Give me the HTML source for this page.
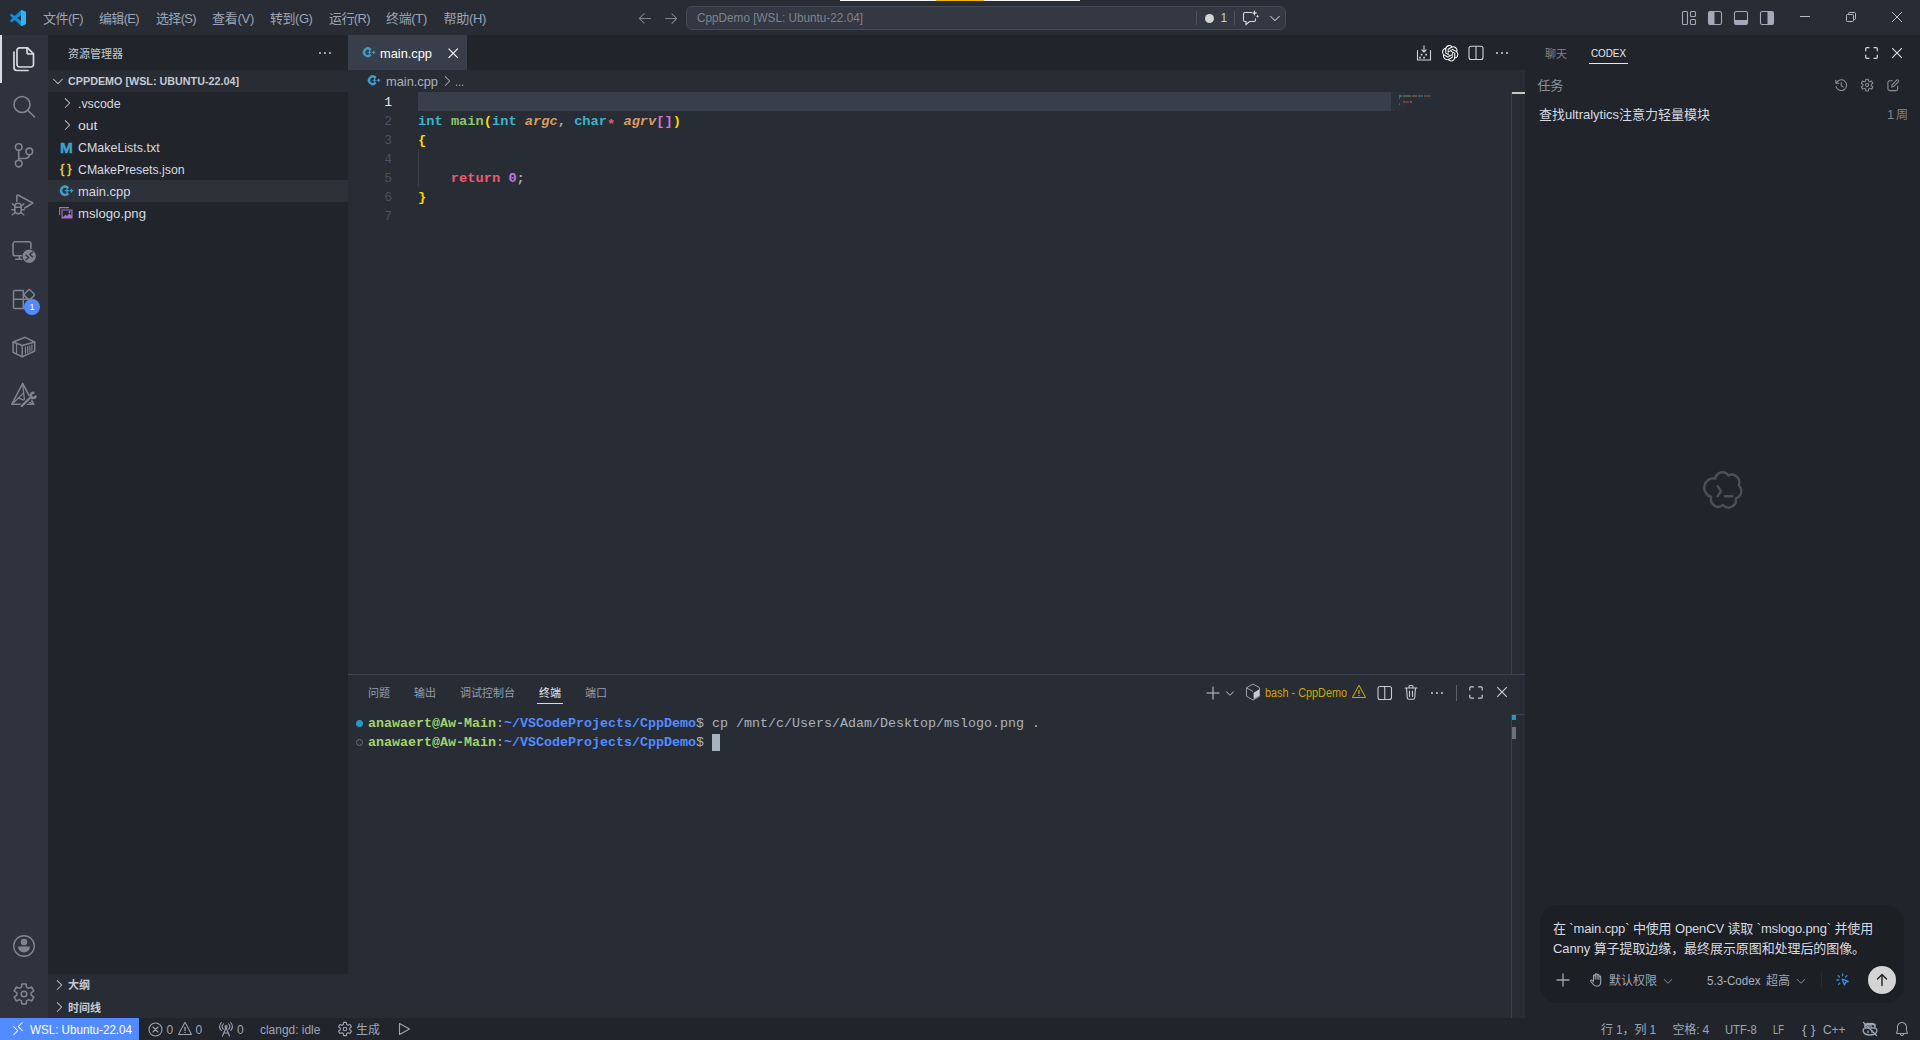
<!DOCTYPE html>
<html lang="zh-CN">
<head>
<meta charset="utf-8">
<title>main.cpp - CppDemo [WSL: Ubuntu-22.04] - Visual Studio Code</title>
<style>
*{box-sizing:border-box;margin:0;padding:0}
html,body{width:1920px;height:1040px;overflow:hidden;background:#282c34}
body{font-family:"Liberation Sans","Noto Sans CJK SC",sans-serif;font-size:13px;color:#9da5b4;position:relative;-webkit-font-smoothing:antialiased}
.abs{position:absolute}
.t{position:absolute;white-space:nowrap;line-height:1}
svg{position:absolute;overflow:visible}
.mono{font-family:"Liberation Mono","Noto Sans CJK SC",monospace}
/* regions */
#titlebar{left:0;top:0;width:1920px;height:35px;background:#282c34}
#activity{left:0;top:35px;width:48px;height:983px;background:#2f333d}
#sidebar{left:48px;top:35px;width:300px;height:983px;background:#21252b}
#tabs{left:348px;top:35px;width:1177px;height:35px;background:#21252b}
#crumbs{left:348px;top:70px;width:1177px;height:22px;background:#282c34}
#editor{left:348px;top:92px;width:1177px;height:582px;background:#282c34}
#panel{left:348px;top:674px;width:1177px;height:344px;background:#282c34}
#aux{left:1525px;top:35px;width:395px;height:983px;background:#21252b}
#status{left:0;top:1018px;width:1920px;height:22px;background:#21252b}
.layer{left:0;top:0;width:1920px;height:1040px}
.r{position:absolute}
</style>
</head>
<body>
<div id="titlebar" class="abs"></div>
<div id="activity" class="abs"></div>
<div id="sidebar" class="abs"></div>
<div id="tabs" class="abs"></div>
<div id="crumbs" class="abs"></div>
<div id="editor" class="abs"></div>
<div id="panel" class="abs"></div>
<div id="aux" class="abs"></div>
<div id="status" class="abs"></div>
<div class="abs layer"><!-- top accent strip -->
<div class="r" style="left:840px;top:0;width:240px;height:1px;background:#f5f5f5"></div>
<div class="r" style="left:936px;top:0;width:48px;height:1px;background:#e9b60c"></div>
<!-- vscode logo -->
<svg style="left:10px;top:10px" width="16" height="16" viewBox="0 0 100 100"><path fill="#0e8ddc" d="M96.5 10.8 75.9.9a6.2 6.2 0 0 0-7.1 1.2L29.4 38 12.200 25a4.200 4.200 0 0 0-5.300.200L1.400 30.300a4.200 4.200 0 0 0 0 6.200L16.200 50 1.400 63.500a4.200 4.200 0 0 0 0 6.200l5.500 5a4.200 4.200 0 0 0 5.300.300L29.400 62l39.400 36a6.200 6.200 0 0 0 7.100 1.200l20.600-9.900a6.200 6.200 0 0 0 3.500-5.600V16.400a6.200 6.200 0 0 0-3.500-5.600zM75 72.700 45.100 50 75 27.300z"/><path fill="#2cb4f6" d="M96.500 10.800 75.900.900a6.200 6.200 0 0 0-7.100 1.200L68 3v94l.800.900a6.200 6.200 0 0 0 7.100 1.200l20.600-9.900a6.200 6.200 0 0 0 3.500-5.600V16.400a6.200 6.200 0 0 0-3.500-5.600zM75 72.700V27.300z"/></svg>
<span class="t" style="left:43.00px;top:11.89px;font-size:13px;color:#9da5b4;letter-spacing:-0.522px;">文件(F)</span>
<span class="t" style="left:99.00px;top:11.89px;font-size:13px;color:#9da5b4;letter-spacing:-0.669px;">编辑(E)</span>
<span class="t" style="left:156.00px;top:11.89px;font-size:13px;color:#9da5b4;letter-spacing:-0.669px;">选择(S)</span>
<span class="t" style="left:212.00px;top:11.89px;font-size:13px;color:#9da5b4;letter-spacing:-0.269px;">查看(V)</span>
<span class="t" style="left:270.00px;top:11.89px;font-size:13px;color:#9da5b4;letter-spacing:-0.456px;">转到(G)</span>
<span class="t" style="left:329.00px;top:11.89px;font-size:13px;color:#9da5b4;letter-spacing:-0.609px;">运行(R)</span>
<span class="t" style="left:386.00px;top:11.89px;font-size:13px;color:#9da5b4;letter-spacing:-0.322px;">终端(T)</span>
<span class="t" style="left:443.50px;top:11.89px;font-size:13px;color:#9da5b4;letter-spacing:-0.309px;">帮助(H)</span>
<!-- nav arrows -->
<svg style="left:637px;top:10px" width="16" height="16" viewBox="0 0 16 16"><path fill="#7d8490" d="M7 3.093l-5 5V8.800l5 5 .707-.707-4.146-4.147H14v-1H3.560L7.708 3.800 7 3.093z"/></svg>
<svg style="left:663px;top:10px" width="16" height="16" viewBox="0 0 16 16"><path fill="#7d8490" d="M9 13.887l5-5V8.180l-5-5-.707.707 4.146 4.147H2v1h10.440L8.292 13.180l.707.707z"/></svg>
<!-- command center -->
<div class="r" style="left:686px;top:6px;width:600px;height:24px;background:#333842;border:1px solid #444a56;border-radius:6px"></div>
<span class="t" style="left:697.00px;top:12.36px;font-size:12px;color:#7d8490;transform:scaleX(0.9798);transform-origin:0 50%;">CppDemo [WSL: Ubuntu-22.04]</span>
<div class="r" style="left:1196px;top:11px;width:1px;height:14px;background:#4b515d"></div>
<div class="r" style="left:1234px;top:11px;width:1px;height:14px;background:#4b515d"></div>
<div class="r" style="left:1205px;top:13.500px;width:9px;height:9px;border-radius:50%;background:#d4d4d4"></div>
<span class="t" style="left:1220.50px;top:12.36px;font-size:12px;color:#c5cad3;">1</span>
<svg style="left:1242px;top:10px" width="18" height="16" viewBox="0 0 18 16" fill="none" stroke="#d7dae0" stroke-width="1.100"><path d="M10 2.500H3a1.500 1.500 0 0 0-1.500 1.500v6A1.500 1.500 0 0 0 3 11.500h1v3l3.500-3H12a1.500 1.500 0 0 0 1.500-1.500V8.500"/><path fill="#d7dae0" stroke="none" d="M12.500 0l.800 2.200 2.200.800-2.200.800-.800 2.200-.800-2.200-2.200-.800 2.200-.800zM15.500 4.500l.500 1.300 1.300.500-1.300.500-.500 1.300-.500-1.300-1.300-.500 1.300-.500z"/></svg>
<svg style="left:1266.500px;top:10px" width="16" height="16" viewBox="0 0 16 16"><path fill="#c5cad3" d="M7.976 10.072l4.357-4.357.620.618L8.284 11h-.618L3 6.333l.619-.618 4.357 4.357z"/></svg>
<!-- layout controls -->
<svg style="left:1681px;top:10px" width="16" height="16" viewBox="0 0 16 16" fill="none" stroke="#a3aaba" stroke-width="1.100"><rect x="1.500" y="1.500" width="5" height="13" rx="1"/><rect x="9.500" y="1.500" width="5" height="5" rx="1"/><rect x="9.500" y="9.500" width="5" height="5" rx="1"/></svg>
<svg style="left:1707px;top:10px" width="16" height="16" viewBox="0 0 16 16"><path fill="#a3aaba" d="M3 1.500h4.500v13H3A1.500 1.500 0 0 1 1.500 13V3A1.500 1.500 0 0 1 3 1.500z"/><rect x="1.500" y="1.500" width="13" height="13" rx="1.800" fill="none" stroke="#a3aaba" stroke-width="1.100"/></svg>
<svg style="left:1733px;top:10px" width="16" height="16" viewBox="0 0 16 16"><path fill="#a3aaba" d="M1.500 10h13v3a1.500 1.500 0 0 1-1.500 1.500H3A1.500 1.500 0 0 1 1.500 13z"/><rect x="1.500" y="1.500" width="13" height="13" rx="1.800" fill="none" stroke="#a3aaba" stroke-width="1.100"/></svg>
<svg style="left:1759px;top:10px" width="16" height="16" viewBox="0 0 16 16"><path fill="#a3aaba" d="M8.500 1.500H13A1.500 1.500 0 0 1 14.500 3v10a1.500 1.500 0 0 1-1.500 1.500H8.500z"/><rect x="1.500" y="1.500" width="13" height="13" rx="1.800" fill="none" stroke="#a3aaba" stroke-width="1.100"/></svg>
<!-- window controls -->
<div class="r" style="left:1800px;top:16px;width:10px;height:1px;background:#b4bac5"></div>
<svg style="left:1846px;top:12px" width="10" height="10" viewBox="0 0 10 10" fill="none" stroke="#b4bac5" stroke-width="1"><rect x=".500" y="2.500" width="7" height="7" rx="1"/><path d="M2.500 2.500V1.500a1 1 0 0 1 1-1h5a1 1 0 0 1 1 1v5a1 1 0 0 1-1 1h-1"/></svg>
<svg style="left:1892px;top:12px" width="10" height="10" viewBox="0 0 10 10" stroke="#b4bac5" stroke-width="1"><path d="M0 0l10 10M10 0L0 10"/></svg>
</div>
<div class="abs layer"><div class="r" style="left:0;top:35px;width:2px;height:48px;background:#d7dae0"></div>
<!-- files -->
<svg style="left:12px;top:46px" width="24" height="26" viewBox="0 0 24 26" fill="none" stroke="#d7dae0" stroke-width="1.700" stroke-linejoin="round" stroke-linecap="round"><path d="M7.500 1.800h8l6 6v10.700a2.500 2.500 0 0 1-2.500 2.500H7.500A2.500 2.500 0 0 1 5 18.500V4.300a2.500 2.500 0 0 1 2.500-2.500z"/><path d="M15 2v4a2 2 0 0 0 2 2h4"/><path d="M2 6v15.500A3 3 0 0 0 5 24.500h11"/></svg>
<!-- search -->
<svg style="left:12px;top:94px" width="24" height="24" viewBox="0 0 24 24" fill="none" stroke="#7f848e" stroke-width="1.600" stroke-linecap="round"><circle cx="10" cy="10.500" r="8"/><path d="M16 16.500l6.500 6.500"/></svg>
<!-- scm -->
<svg style="left:12px;top:142px" width="24" height="24" viewBox="0 0 24 24" fill="none" stroke="#7f848e" stroke-width="1.600" stroke-linecap="round"><circle cx="6.700" cy="5" r="3.300"/><circle cx="6.700" cy="21.600" r="3.300"/><circle cx="17.300" cy="9.400" r="3.300"/><path d="M6.700 8.300v10M17.300 12.700c0 3-2.500 3.800-5 3.800H6.700"/></svg>
<!-- debug -->
<svg style="left:12px;top:191px" width="24" height="26" viewBox="0 0 24 26" fill="none" stroke="#7f848e" stroke-width="1.600" stroke-linecap="round" stroke-linejoin="round"><path d="M4.800 10.300V5.200a1 1 0 0 1 1.500-.900L20.800 12l-8 5"/><rect x="2.800" y="12.300" width="6.500" height="10.400" rx="3.250"/><path stroke-width="1.400" d="M2.800 16.200h6.500M2.600 15L.300 12.800M2.600 18.800H-.200M3 21.600L.300 23.800M9.500 15l2.300-2.200M9.500 18.800h2.800M9.100 21.600l2.700 2.200"/></svg>
<!-- remote explorer -->
<svg style="left:12px;top:239px" width="26" height="26" viewBox="0 0 26 26" fill="none" stroke="#7f848e" stroke-width="1.600" stroke-linecap="round" stroke-linejoin="round"><path d="M9.500 16.800H3.200A2.200 2.200 0 0 1 1 14.600V5a2.200 2.200 0 0 1 2.200-2.200h13.500A2.200 2.200 0 0 1 18.900 5v4.500"/><path d="M3.800 20.200h6M7.400 17v3"/><circle cx="17.200" cy="17.200" r="6.700" fill="#7f848e" stroke="none"/><path stroke="#2f333d" stroke-width="1.300" d="M14.100 16.200l2.500 2.300-2.500 2.300M20.600 13.100l-2.800 2.500 2.800 2.300"/></svg>
<!-- extensions -->
<svg style="left:12px;top:287px" width="26" height="26" viewBox="0 0 26 26" fill="none" stroke="#7f848e" stroke-width="1.500" stroke-linejoin="round"><path d="M1.500 5a1.500 1.500 0 0 1 1.500-1.500h8.300V21.500H3a1.500 1.500 0 0 1-1.500-1.500zM1.500 12.300h18.300V20a1.500 1.500 0 0 1-1.500 1.500h-7"/><rect x="13.300" y="3.800" width="8" height="8" rx="1.200" transform="rotate(45 17.300 7.800)"/></svg>
<div class="r" style="left:24px;top:299px;width:16px;height:16px;border-radius:8px;background:#528bff"></div>
<span class="t" style="left:29.50px;top:302.77px;font-size:9px;color:#ffffff;">1</span>
<!-- containers -->
<svg style="left:12px;top:335px" width="24" height="24" viewBox="0 0 24 24" fill="none" stroke="#7f848e" stroke-width="1.500" stroke-linejoin="round" stroke-linecap="round"><path d="M1.100 7L13.200 2.300 22.700 7v9.100L10.200 21.700 1.100 17.400z"/><path d="M1.100 7l9.100 3.500L22.700 7M10.200 10.500v11.200"/><path stroke-width="1.200" d="M4.500 8.800v9.800M13.400 12v6.200M15.600 11.400v6M17.800 10.800v5.800M19.900 10.200v5.600"/></svg>
<!-- cmake -->
<svg style="left:11px;top:382px" width="26" height="26" viewBox="0 0 26 26" fill="none" stroke="#7f848e" stroke-width="1.600" stroke-linejoin="round" stroke-linecap="round"><path d="M11.600 1.500L.900 22.200h21.800z"/><path stroke-width="1.300" d="M11.600 1.500l1.900 16.300M.900 22.200L12.700 11M22.700 22.200L7.300 15.800"/><path stroke="#2f333d" stroke-width="4.600" d="M11.500 23.500l7.500-7.500"/><path stroke-width="2.400" d="M10.800 24l8-8"/><path stroke-width="2.600" d="M22.300 10.800a2.600 2.600 0 1 0 2.300 3.900"/></svg>
<!-- account -->
<svg style="left:12px;top:934px" width="24" height="24" viewBox="0 0 24 24"><circle cx="12" cy="12" r="10.300" fill="none" stroke="#7f848e" stroke-width="1.400"/><circle cx="12" cy="8" r="3.300" fill="#7f848e"/><path fill="#7f848e" d="M6 12.500h12a6 6 0 0 1-12 0z"/></svg>
<!-- settings -->
<svg style="left:12px;top:982px" width="24" height="24" viewBox="0 0 24 24" fill="none" stroke="#7f848e" stroke-width="1.600" stroke-linejoin="round"><path d="M9.460 5.160 L9.860 1.930 L14.140 1.930 L14.540 5.160 L16.650 6.380 L19.650 5.110 L21.800 8.820 L19.200 10.780 L19.200 13.220 L21.800 15.180 L19.650 18.890 L16.650 17.620 L14.540 18.840 L14.140 22.070 L9.860 22.070 L9.460 18.840 L7.350 17.620 L4.350 18.890 L2.200 15.180 L4.800 13.220 L4.800 10.780 L2.200 8.820 L4.350 5.110 L7.350 6.380Z"/><circle cx="12" cy="12" r="2.800"/></svg>
</div>
<div class="abs layer"><span class="t" style="left:68.00px;top:48.83px;font-size:11px;color:#c5cad3;">资源管理器</span>
<svg style="left:317px;top:45px" width="16" height="16" viewBox="0 0 16 16"><path fill="#c5cad3" d="M4 8a1 1 0 1 1-2 0 1 1 0 0 1 2 0zm5 0a1 1 0 1 1-2 0 1 1 0 0 1 2 0zm5 0a1 1 0 1 1-2 0 1 1 0 0 1 2 0z"/></svg>
<div class="r" style="left:48px;top:70px;width:300px;height:22px;background:#282c34"></div>
<svg style="left:50px;top:73px" width="16" height="16" viewBox="0 0 16 16"><path fill="#c5cad3" d="M7.976 10.072l4.357-4.357.620.618L8.284 11h-.618L3 6.333l.619-.618 4.357 4.357z"/></svg>
<span class="t" style="left:68.00px;top:75.83px;font-size:11px;color:#c5cad3;font-weight:700;transform:scaleX(0.9783);transform-origin:0 50%;">CPPDEMO [WSL: UBUNTU-22.04]</span>
<svg style="left:59px;top:95px" width="16" height="16" viewBox="0 0 16 16"><path fill="#c5cad3" d="M10.072 8.024L5.715 3.667l.618-.620L11 7.716v.618L6.333 13l-.618-.619 4.357-4.357z"/></svg>
<span class="t" style="left:78.00px;top:96.89px;font-size:13px;color:#d7dae0;transform:scaleX(0.9506);transform-origin:0 50%;">.vscode</span>
<svg style="left:59px;top:117px" width="16" height="16" viewBox="0 0 16 16"><path fill="#c5cad3" d="M10.072 8.024L5.715 3.667l.618-.620L11 7.716v.618L6.333 13l-.618-.619 4.357-4.357z"/></svg>
<span class="t" style="left:78.00px;top:118.89px;font-size:13px;color:#d7dae0;transform:scaleX(1.0787);transform-origin:0 50%;">out</span>
<span class="t" style="left:59.50px;top:140.25px;font-size:15px;color:#3fa4c9;font-weight:700;transform:scaleX(1.0240);transform-origin:0 50%;-webkit-text-stroke:.4px #3fa4c9;">M</span>
<span class="t" style="left:78.00px;top:140.89px;font-size:13px;color:#d7dae0;transform:scaleX(0.9572);transform-origin:0 50%;">CMakeLists.txt</span>
<span class="t" style="left:60.00px;top:162.39px;font-size:13px;color:#e6d74a;-webkit-text-stroke:.35px #e6d74a;">&#123;</span><span class="t" style="left:67.30px;top:162.39px;font-size:13px;color:#e6d74a;-webkit-text-stroke:.35px #e6d74a;">&#125;</span>
<span class="t" style="left:78.00px;top:162.89px;font-size:13px;color:#d7dae0;transform:scaleX(0.9457);transform-origin:0 50%;">CMakePresets.json</span>
<div class="r" style="left:48px;top:180px;width:300px;height:22px;background:#2c313a"></div>
<svg style="left:60px;top:185px" width="14" height="12" viewBox="0 0 14 12" fill="none" stroke="#409dc9" stroke-linecap="round"><path stroke-width="2.600" d="M7.600 2.500A4.100 4.100 0 1 0 7.600 9"/><path stroke-width="1.300" d="M5.300 5.700h3.400M7 4v3.400M10.200 5.700h2.600M11.500 4.400v2.600"/></svg>
<span class="t" style="left:78.00px;top:184.89px;font-size:13px;color:#d7dae0;transform:scaleX(0.9934);transform-origin:0 50%;">main.cpp</span>
<svg style="left:59px;top:207px" width="14" height="12" viewBox="0 0 14 12"><path fill="none" stroke="#a074c4" stroke-width="1.100" d="M.600 8V.600H10"/><rect x="2.500" y="2.500" width="11" height="9" fill="#a074c4"/><path fill="#21252b" d="M3.600 3.600h8.800v5l-2.200-2.200-2.200 2.700-1.600-1.300-2.800 2.500z"/><path stroke="#a074c4" stroke-width="1" d="M10.500 3.800v2.400M9.300 5h2.400"/></svg>
<span class="t" style="left:78.00px;top:206.89px;font-size:13px;color:#d7dae0;transform:scaleX(1.0116);transform-origin:0 50%;">mslogo.png</span>
<!-- outline/timeline -->
<div class="r" style="left:48px;top:974px;width:300px;height:44px;background:#282c34"></div>
<svg style="left:51px;top:977px" width="16" height="16" viewBox="0 0 16 16"><path fill="#c5cad3" d="M10.072 8.024L5.715 3.667l.618-.620L11 7.716v.618L6.333 13l-.618-.619 4.357-4.357z"/></svg>
<span class="t" style="left:68.00px;top:980.33px;font-size:11px;color:#c5cad3;font-weight:700;">大纲</span>
<svg style="left:51px;top:999px" width="16" height="16" viewBox="0 0 16 16"><path fill="#c5cad3" d="M10.072 8.024L5.715 3.667l.618-.620L11 7.716v.618L6.333 13l-.618-.619 4.357-4.357z"/></svg>
<span class="t" style="left:68.00px;top:1002.53px;font-size:11px;color:#c5cad3;font-weight:700;">时间线</span>
</div>
<div class="abs layer"><div class="r" style="left:348px;top:35px;width:119px;height:35px;background:#383e4a"></div>
<svg style="left:362.500px;top:46.500px" width="13" height="11" viewBox="0 0 14 12" fill="none" stroke="#409dc9" stroke-linecap="round"><path stroke-width="2.600" d="M7.600 2.500A4.100 4.100 0 1 0 7.600 9"/><path stroke-width="1.300" d="M5.300 5.700h3.400M7 4v3.400M10.200 5.700h2.600M11.500 4.400v2.600"/></svg>
<span class="t" style="left:380.00px;top:47.39px;font-size:13px;color:#ffffff;transform:scaleX(0.9858);transform-origin:0 50%;">main.cpp</span>
<svg style="left:443.800px;top:43.800px" width="18.400" height="18.400" viewBox="0 0 16 16"><path fill="#ffffff" d="M8 8.707l3.646 3.647.708-.707L8.707 8l3.647-3.646-.707-.708L8 7.293 4.354 3.646l-.707.708L7.293 8l-3.646 3.646.707.708L8 8.707z"/></svg>
<!-- editor actions -->
<svg style="left:1416px;top:44.500px" width="16" height="16" viewBox="0 0 16 16" fill="none" stroke="#d0d4dc" stroke-width="1.100" stroke-linejoin="round" stroke-linecap="round"><path d="M1.500 5.500V15h13V5.500"/><path d="M8 .800v6M5.800 4.800L8 7l2.200-2.200"/><path stroke="none" fill="#d0d4dc" d="M4.700 8.700h1.700v1.700H4.700zM9.300 8.700H11v1.700H9.300zM3.200 11.700h1.700v1.700H3.200zM7.200 11.700h1.700v1.700H7.200z"/></svg>
<svg style="left:1442px;top:44.500px" width="16.500" height="16.500" viewBox="0 0 24 24"><path fill="#ffffff" d="M22.2819 9.8211a5.9847 5.9847 0 0 0-.5157-4.9108 6.0462 6.0462 0 0 0-6.5098-2.9A6.0651 6.0651 0 0 0 4.9807 4.1818a5.9847 5.9847 0 0 0-3.9977 2.9 6.0462 6.0462 0 0 0 .7427 7.0966 5.98 5.98 0 0 0 .511 4.9107 6.051 6.051 0 0 0 6.5146 2.9001A5.9847 5.9847 0 0 0 13.2599 24a6.0557 6.0557 0 0 0 5.7718-4.2058 5.9894 5.9894 0 0 0 3.9977-2.9001 6.0557 6.0557 0 0 0-.7475-7.0729zm-9.022 12.6081a4.4755 4.4755 0 0 1-2.8764-1.0408l.1419-.0804 4.7783-2.7582a.7948.7948 0 0 0 .3927-.6813v-6.7369l2.02 1.1686a.071.071 0 0 1 .038.052v5.5826a4.504 4.504 0 0 1-4.4945 4.4944zm-9.6607-4.1254a4.4708 4.4708 0 0 1-.5346-3.0137l.142.0852 4.783 2.7582a.7712.7712 0 0 0 .7806 0l5.8428-3.3685v2.3324a.0804.0804 0 0 1-.0332.0615L9.74 19.9502a4.4992 4.4992 0 0 1-6.1408-1.6464zM2.3408 7.8956a4.485 4.485 0 0 1 2.3655-1.9728V11.6a.7664.7664 0 0 0 .3879.6765l5.8144 3.3543-2.0201 1.1685a.0757.0757 0 0 1-.071 0l-4.8303-2.7865A4.504 4.504 0 0 1 2.3408 7.872zm16.5963 3.8558L13.1038 8.364 15.1192 7.2a.0757.0757 0 0 1 .071 0l4.8303 2.7913a4.4944 4.4944 0 0 1-.6765 8.1042v-5.6772a.79.79 0 0 0-.407-.667zm2.0107-3.0231l-.142-.0852-4.7735-2.7818a.7759.7759 0 0 0-.7854 0L9.409 9.2297V6.8974a.0662.0662 0 0 1 .0284-.0615l4.8303-2.7866a4.4992 4.4992 0 0 1 6.6802 4.66zM8.3065 12.863l-2.02-1.1638a.0804.0804 0 0 1-.038-.0567V6.0742a4.4992 4.4992 0 0 1 7.3757-3.4537l-.142.0805L8.704 5.459a.7948.7948 0 0 0-.3927.6813zm1.0976-2.3654l2.602-1.4998 2.6069 1.4998v2.9994l-2.5974 1.4997-2.6067-1.4997Z"/></svg>
<svg style="left:1468px;top:45px" width="16" height="16" viewBox="0 0 16 16" fill="none" stroke="#d0d4dc" stroke-width="1.100"><rect x="1" y="1.200" width="14" height="13.300" rx="2"/><path d="M8 1.200v13.300"/></svg>
<svg style="left:1494px;top:45px" width="16" height="16" viewBox="0 0 16 16"><path fill="#d0d4dc" d="M4 8a1 1 0 1 1-2 0 1 1 0 0 1 2 0zm5 0a1 1 0 1 1-2 0 1 1 0 0 1 2 0zm5 0a1 1 0 1 1-2 0 1 1 0 0 1 2 0z"/></svg>
</div>
<div class="abs layer"><svg style="left:368px;top:75px" width="13" height="11" viewBox="0 0 14 12" fill="none" stroke="#409dc9" stroke-linecap="round"><path stroke-width="2.600" d="M7.600 2.500A4.100 4.100 0 1 0 7.600 9"/><path stroke-width="1.300" d="M5.300 5.700h3.400M7 4v3.400M10.200 5.700h2.600M11.500 4.400v2.600"/></svg>
<span class="t" style="left:386.00px;top:74.89px;font-size:13px;color:#abb2bf;transform:scaleX(0.9858);transform-origin:0 50%;">main.cpp</span>
<svg style="left:439px;top:73px" width="16" height="16" viewBox="0 0 16 16"><path fill="#abb2bf" d="M10.072 8.024L5.715 3.667l.618-.620L11 7.716v.618L6.333 13l-.618-.619 4.357-4.357z"/></svg>
<span class="t" style="left:454.50px;top:74.89px;font-size:13px;color:#abb2bf;transform:scaleX(0.8300);transform-origin:0 50%;">...</span>
</div>
<div class="abs layer"><style>
.cl{position:absolute;left:418px;font-family:"Liberation Mono",monospace;font-size:13.700px;font-weight:700;line-height:19px;white-space:pre;color:#abb2bf}
.ln{position:absolute;left:348px;width:44px;text-align:right;font-family:"Liberation Mono",monospace;font-size:13px;line-height:19px;color:#495162}
.k{color:#3cb4c8}.f{color:#8fc46e}.p1{color:#ffd700}.p2{color:#da70d6}.v{color:#d89a60;font-style:italic}.rd{color:#ef596f}.n{color:#c873e0}
</style>
<div class="r" style="left:418px;top:92px;width:973px;height:19px;background:#383e4a"></div>
<div class="r" style="left:418px;top:149px;width:1px;height:38px;background:#3b4048"></div>
<div class="ln" style="top:93px;color:#e6e6e6">1</div>
<div class="ln" style="top:112px">2</div>
<div class="ln" style="top:131px">3</div>
<div class="ln" style="top:150px">4</div>
<div class="ln" style="top:169px">5</div>
<div class="ln" style="top:188px">6</div>
<div class="ln" style="top:207px">7</div>
<div class="cl" style="top:112px"><span class="k">int</span> <span class="f">main</span><span class="p1">(</span><span class="k">int</span> <span class="v">argc</span>, <span class="k">char</span><span class="rd" style="position:relative;top:3px">*</span> <span class="v">agrv</span><span class="p2">[]</span><span class="p1">)</span></div>
<div class="cl" style="top:131px"><span class="p1">{</span></div>
<div class="cl" style="top:169px">    <span class="rd">return</span> <span class="n">0</span>;</div>
<div class="cl" style="top:188px"><span class="p1">}</span></div>
<!-- minimap -->
<div class="r" style="left:1391px;top:92px;width:14px;height:19px;background:#2b2f38"></div>
<div class="r" style="left:1399px;top:95px;width:3px;height:1.500px;background:#3cb4c8;opacity:.45"></div>
<div class="r" style="left:1403px;top:95px;width:8px;height:1.500px;background:#8fc46e;opacity:.35"></div>
<div class="r" style="left:1412px;top:95px;width:5px;height:1.500px;background:#d89a60;opacity:.35"></div>
<div class="r" style="left:1418px;top:95px;width:5px;height:1.500px;background:#3cb4c8;opacity:.35"></div>
<div class="r" style="left:1424px;top:95px;width:7px;height:1.500px;background:#d89a60;opacity:.25"></div>
<div class="r" style="left:1399px;top:97px;width:1px;height:1.500px;background:#ffd700;opacity:.25"></div>
<div class="r" style="left:1403px;top:101px;width:6px;height:1.500px;background:#ef596f;opacity:.35"></div>
<div class="r" style="left:1410px;top:101px;width:2px;height:1.500px;background:#c873e0;opacity:.45"></div>
<div class="r" style="left:1399px;top:103px;width:1px;height:1.500px;background:#ffd700;opacity:.25"></div>
<!-- overview ruler -->
<div class="r" style="left:1511px;top:92px;width:1px;height:582px;background:#3a3f4b"></div>
<div class="r" style="left:1512px;top:92px;width:13px;height:2px;background:#c8c8bc"></div>
</div>
<div class="abs layer"><div class="r" style="left:348px;top:674px;width:1177px;height:1px;background:#3e4452"></div>
<span class="t" style="left:368.00px;top:688.43px;font-size:11px;color:#969dab;">问题</span>
<span class="t" style="left:414.00px;top:688.43px;font-size:11px;color:#969dab;">输出</span>
<span class="t" style="left:460.00px;top:688.43px;font-size:11px;color:#969dab;">调试控制台</span>
<span class="t" style="left:539.00px;top:688.43px;font-size:11px;color:#e6e8ec;">终端</span>
<span class="t" style="left:585.00px;top:688.43px;font-size:11px;color:#969dab;">端口</span>
<div class="r" style="left:537px;top:703px;width:26px;height:1px;background:#d7dae0"></div>
<!-- panel actions -->
<svg style="left:1205px;top:684.500px" width="16" height="16" viewBox="0 0 16 16"><path fill="#c5cad3" d="M14.500 7.500v1H8.500v6H7.500V8.500H1.500V7.500h6V1.500h1v6h6z"/></svg>
<svg style="left:1221.500px;top:685px" width="16" height="16" viewBox="0 0 16 16"><path fill="#c5cad3" d="M7.976 10.072l4.357-4.357.620.618L8.284 11h-.618L3 6.333l.619-.618 4.357 4.357z" transform="translate(1.600 1.600) scale(.8)"/></svg>
<svg style="left:1245px;top:683px" width="16" height="18" viewBox="0 0 16 18" fill="none" stroke="#9aa1ae" stroke-width="1" stroke-linejoin="round"><path d="M8 1l6.500 3.700v8.600L8 17l-6.500-3.700V4.700z"/><path fill="#c5cad3" stroke="none" d="M8.600 9.800l5.400-3.200v6.300l-5.400 3.100z"/><path d="M1.500 4.700L8 8.500"/></svg>
<span class="t" style="left:1265.00px;top:686.86px;font-size:12px;color:#cca700;transform:scaleX(0.9039);transform-origin:0 50%;">bash - CppDemo</span>
<svg style="left:1351px;top:684px" width="16" height="16" viewBox="0 0 16 16"><path fill="#cca700" d="M7.560 1h.880l6.540 12.260-.440.740H1.440L1 13.260 7.560 1zM8 2.280L2.280 13H13.700L8 2.280zM8.625 12v-1h-1.250v1h1.250zm-1.250-2V6h1.250v4h-1.250z"/></svg>
<svg style="left:1377px;top:685px" width="16" height="16" viewBox="0 0 16 16" fill="none" stroke="#c5cad3" stroke-width="1.100"><rect x="1" y="1.500" width="13.500" height="13" rx="2"/><path d="M7.750 1.500v13"/></svg>
<svg style="left:1403px;top:684px" width="16" height="16" viewBox="0 0 16 16" fill="none" stroke="#c5cad3" stroke-width="1.100" stroke-linecap="round"><path d="M2 4h12M6 3.800V2.500a1 1 0 0 1 1-1h2a1 1 0 0 1 1 1v1.300M3.500 4.200l.800 9.800a1.500 1.500 0 0 0 1.500 1.300h4.400a1.500 1.500 0 0 0 1.500-1.300l.800-9.800M6.500 7v5.500M9.500 7v5.500"/></svg>
<svg style="left:1429px;top:684.500px" width="16" height="16" viewBox="0 0 16 16"><path fill="#c5cad3" d="M4 8a1 1 0 1 1-2 0 1 1 0 0 1 2 0zm5 0a1 1 0 1 1-2 0 1 1 0 0 1 2 0zm5 0a1 1 0 1 1-2 0 1 1 0 0 1 2 0z"/></svg>
<div class="r" style="left:1456px;top:685px;width:1px;height:16px;background:#5a606c"></div>
<svg style="left:1469px;top:685.500px" width="14" height="13" viewBox="0 0 14 13" fill="none" stroke="#c5cad3" stroke-width="1.200" stroke-linecap="round" stroke-linejoin="round"><path d="M.800 4V1.800a1 1 0 0 1 1-1H4.500M9.500.800h2.700a1 1 0 0 1 1 1V4M13.200 9v2.200a1 1 0 0 1-1 1H9.500M4.500 12.200H1.800a1 1 0 0 1-1-1V9"/></svg>
<svg style="left:1494px;top:684px" width="16" height="16" viewBox="0 0 16 16"><path fill="#c5cad3" d="M8 8.707l3.646 3.647.708-.707L8.707 8l3.647-3.646-.707-.708L8 7.293 4.354 3.646l-.707.708L7.293 8l-3.646 3.646.707.708L8 8.707z" transform="translate(-1.600 -1.600) scale(1.200)"/></svg>
<!-- terminal -->
<style>
.tl{position:absolute;left:368px;font-family:"Liberation Mono",monospace;font-size:13.330px;line-height:19px;white-space:pre;color:#abb2bf}
.tg{color:#a3d46e;font-weight:700}.tb{color:#528bff;font-weight:700}
</style>
<div class="r" style="left:355.500px;top:719.500px;width:7px;height:7px;border-radius:50%;background:#2798c4"></div>
<div class="r" style="left:355.500px;top:738.500px;width:7px;height:7px;border-radius:50%;border:1.300px solid #6b717d"></div>
<div class="tl" style="top:714px"><span class="tg">anawaert@Aw-Main</span>:<span class="tb">~/VSCodeProjects/CppDemo</span>$ cp /mnt/c/Users/Adam/Desktop/mslogo.png .</div>
<div class="tl" style="top:733px"><span class="tg">anawaert@Aw-Main</span>:<span class="tb">~/VSCodeProjects/CppDemo</span>$ </div>
<div class="r" style="left:712px;top:734px;width:8px;height:17px;background:#abb2bf"></div>
<!-- terminal scrollbar -->
<div class="r" style="left:1511px;top:714px;width:1px;height:304px;background:#3a3f4b"></div>
<div class="r" style="left:1511px;top:714px;width:14px;height:1px;background:#3a3f4b"></div>
<div class="r" style="left:1512px;top:715px;width:4px;height:5px;background:#2798c4"></div>
<div class="r" style="left:1512px;top:727px;width:4px;height:12px;background:#6b717d"></div>
</div>
<div class="abs layer"><span class="t" style="left:1545.00px;top:48.83px;font-size:11px;color:#7f848e;">聊天</span>
<span class="t" style="left:1591.00px;top:47.83px;font-size:11px;color:#e6e8ec;transform:scaleX(0.8946);transform-origin:0 50%;">CODEX</span>
<div class="r" style="left:1589px;top:63px;width:39px;height:1px;background:#e6e8ec"></div>
<svg style="left:1864.500px;top:47px" width="13" height="12" viewBox="0 0 13 12" fill="none" stroke="#d7dae0" stroke-width="1.200" stroke-linecap="round" stroke-linejoin="round"><path d="M.700 3.800V1.700a1 1 0 0 1 1-1H4M9 .700h2.300a1 1 0 0 1 1 1V3.800M12.300 8.200v2.100a1 1 0 0 1-1 1H9M4 11.300H1.700a1 1 0 0 1-1-1V8.200"/></svg>
<svg style="left:1889px;top:45px" width="16" height="16" viewBox="0 0 16 16"><path fill="#d7dae0" d="M8 8.707l3.646 3.647.708-.707L8.707 8l3.647-3.646-.707-.708L8 7.293 4.354 3.646l-.707.708L7.293 8l-3.646 3.646.707.708L8 8.707z" transform="translate(-1.600 -1.600) scale(1.200)"/></svg>
<span class="t" style="left:1537.50px;top:79.39px;font-size:13px;color:#8a919e;letter-spacing:-0.258px;">任务</span>
<!-- history -->
<svg style="left:1834.500px;top:79px" width="12.500" height="12.500" viewBox="0 0 14 14" fill="none" stroke="#8a919e" stroke-width="1.200" stroke-linecap="round" stroke-linejoin="round"><path d="M1.500 4.500A6 6 0 1 1 1.200 8.500M1 1.500v3.200h3.200M7 4v3.500l2.200 1.300"/></svg>
<!-- gear -->
<svg style="left:1859.800px;top:78.200px" width="14.200" height="14.200" viewBox="0 0 16 16" fill="none" stroke="#8a919e" stroke-width="1.200" stroke-linejoin="round"><path d="M6.330 3.500 L6.590 1.350 L9.410 1.350 L9.670 3.500 L11.060 4.300 L13.050 3.450 L14.470 5.900 L12.730 7.200 L12.730 8.800 L14.470 10.100 L13.050 12.550 L11.060 11.700 L9.670 12.500 L9.410 14.650 L6.590 14.650 L6.330 12.500 L4.940 11.700 L2.950 12.550 L1.530 10.100 L3.270 8.800 L3.270 7.200 L1.530 5.900 L2.950 3.450 L4.940 4.300Z"/><circle cx="8" cy="8" r="1.800"/></svg>
<!-- edit -->
<svg style="left:1887px;top:79px" width="12.500" height="12.500" viewBox="0 0 14 14" fill="none" stroke="#8a919e" stroke-width="1.200" stroke-linecap="round" stroke-linejoin="round"><path d="M6 2H3a2 2 0 0 0-2 2v7a2 2 0 0 0 2 2h7a2 2 0 0 0 2-2V8"/><path d="M10.800 1.200a1.300 1.300 0 0 1 1.900 1.900L7.500 8.300l-2.300.500.500-2.300z"/></svg>
<span class="t" style="left:1539.00px;top:107.89px;font-size:13px;color:#d7dae0;letter-spacing:-0.009px;">查找ultralytics注意力轻量模块</span>
<span class="t" style="left:1887.00px;top:107.89px;font-size:13px;color:#7f848e;">1</span><span class="t" style="left:1896.00px;top:108.86px;font-size:12px;color:#7f848e;">周</span>
<!-- codex logo -->
<svg style="left:1703.500px;top:468.500px" width="41" height="42.500" preserveAspectRatio="none" viewBox="0 0 42 42" fill="none" stroke="#4b4f58" stroke-width="2.400" stroke-linecap="round" stroke-linejoin="round"><path d="M11.500 9.500a7.500 7.500 0 0 1 13.500-3 7.500 7.500 0 0 1 10.500 9.500 7.500 7.500 0 0 1-3 13 7.500 7.500 0 0 1-13 6.500 7.500 7.500 0 0 1-12-8 7.500 7.500 0 0 1 4-18z"/><path d="M14 17l3.300 5-3.300 5M21.500 27h7.500"/></svg>
<!-- input box -->
<div class="r" style="left:1540px;top:905px;width:364px;height:98px;border-radius:18px;background:#1c1f24"></div>
<span class="t" style="left:1553.00px;top:921.89px;font-size:13px;color:#d7dae0;letter-spacing:-0.135px;">在 `main.cpp` 中使用 OpenCV 读取 `mslogo.png` 并使用</span>
<span class="t" style="left:1553.00px;top:941.89px;font-size:13px;color:#d7dae0;letter-spacing:-0.082px;">Canny 算子提取边缘，最终展示原图和处理后的图像。</span>
<svg style="left:1556px;top:973px" width="14" height="14" viewBox="0 0 14 14" stroke="#9da5b4" stroke-width="1.300" stroke-linecap="round"><path d="M7 1v12M1 7h12"/></svg>
<svg style="left:1590px;top:973px" width="13" height="14" viewBox="0 0 13 14" fill="none" stroke="#9da5b4" stroke-width="1.100" stroke-linecap="round" stroke-linejoin="round"><path d="M3.500 7.500V3a.900.900 0 0 1 1.800 0v3M5.300 6V1.800a.900.900 0 0 1 1.800 0V6M7.100 6V2.500a.900.900 0 0 1 1.800 0V6.500M8.900 6.500V4a.900.900 0 0 1 1.800 0v5c0 2.500-1.700 4.200-4 4.200-1.800 0-2.800-.800-3.700-2.200L.800 8.500a.900.900 0 0 1 1.500-1l1.200 1.500"/></svg>
<span class="t" style="left:1609.00px;top:975.36px;font-size:12px;color:#9da5b4;">默认权限</span>
<svg style="left:1660px;top:972.500px" width="16" height="16" viewBox="0 0 16 16"><path fill="#8a919e" d="M7.976 10.072l4.357-4.357.620.618L8.284 11h-.618L3 6.333l.619-.618 4.357 4.357z" transform="translate(1.200 1.200) scale(.85)"/></svg>
<span class="t" style="left:1706.50px;top:974.86px;font-size:12px;color:#abb2bf;transform:scaleX(0.9661);transform-origin:0 50%;">5.3-Codex</span>
<span class="t" style="left:1766.00px;top:975.36px;font-size:12px;color:#9da5b4;letter-spacing:-0.008px;">超高</span>
<svg style="left:1793px;top:972.500px" width="16" height="16" viewBox="0 0 16 16"><path fill="#8a919e" d="M7.976 10.072l4.357-4.357.620.618L8.284 11h-.618L3 6.333l.619-.618 4.357 4.357z" transform="translate(1.200 1.200) scale(.85)"/></svg>
<div class="r" style="left:1821px;top:972px;width:1px;height:16px;background:#272b32"></div>
<svg style="left:1836px;top:973px" width="14" height="14" viewBox="0 0 16 16" fill="none" stroke="#3b8eea" stroke-width="1.500" stroke-linecap="round" stroke-linejoin="round"><path d="M7 7l7 2.500-3 1.200-1.300 3z"/><path d="M7.500 1v2M2.500 3l1.500 1.500M1 8h2M3 13l1.300-1.300M12.500 3L11 4.500"/></svg>
<div class="r" style="left:1868px;top:966px;width:28px;height:28px;border-radius:50%;background:#d4d4d4"></div>
<svg style="left:1875px;top:973px" width="14" height="14" viewBox="0 0 14 14" fill="none" stroke="#1c1f24" stroke-width="1.400" stroke-linecap="round" stroke-linejoin="round"><path d="M7 12.500V1.800M2.500 6L7 1.500 11.500 6"/></svg>
</div>
<div class="abs layer"><div class="r" style="left:0;top:1018px;width:139px;height:22px;background:#528bff"></div>
<svg style="left:10px;top:1021px" width="16" height="16" viewBox="0 0 16 16"><path fill="#ffffff" d="M12.904 9.570L8.928 5.596l3.976-3.976-.619-.620L8 5.286v.619l4.285 4.285.620-.618zM3 5.620l4.072 4.070L3 13.763l.619.618L8 10v-.619L3.619 5 3 5.619z"/></svg>
<span class="t" style="left:30.00px;top:1024.36px;font-size:12px;color:#ffffff;transform:scaleX(0.9677);transform-origin:0 50%;">WSL: Ubuntu-22.04</span>
<svg style="left:148px;top:1021.500px" width="15" height="15" viewBox="0 0 15 15" fill="none" stroke="#9da5b4" stroke-width="1.100" stroke-linecap="round"><circle cx="7.500" cy="7.500" r="6.500"/><path d="M5 5l5 5M10 5l-5 5"/></svg>
<span class="t" style="left:166.50px;top:1024.36px;font-size:12px;color:#9da5b4;">0</span>
<svg style="left:177px;top:1021px" width="16" height="16" viewBox="0 0 16 16"><path fill="#9da5b4" d="M7.560 1h.880l6.540 12.260-.440.740H1.440L1 13.260 7.560 1zM8 2.280L2.280 13H13.700L8 2.280zM8.625 12v-1h-1.250v1h1.250zm-1.250-2V6h1.250v4h-1.250z"/></svg>
<span class="t" style="left:195.50px;top:1024.36px;font-size:12px;color:#9da5b4;">0</span>
<svg style="left:219px;top:1021.500px" width="14" height="15" viewBox="0 0 14 15" fill="none" stroke="#9da5b4" stroke-width="1.100" stroke-linecap="round" stroke-linejoin="round"><path d="M3.500 14L7 5.500 10.500 14M4.800 11h4.400"/><circle cx="7" cy="4.500" r="1"/><path d="M4.300 1.800a3.800 3.800 0 0 0 0 5.400M9.700 1.800a3.800 3.800 0 0 1 0 5.400M2.300.500a6.200 6.200 0 0 0 0 8M11.700.500a6.200 6.200 0 0 1 0 8"/></svg>
<span class="t" style="left:237.00px;top:1024.36px;font-size:12px;color:#9da5b4;">0</span>
<span class="t" style="left:260.00px;top:1024.36px;font-size:12px;color:#9da5b4;transform:scaleX(0.9948);transform-origin:0 50%;">clangd: idle</span>
<svg style="left:336.500px;top:1021px" width="16" height="16" viewBox="0 0 16 16" fill="none" stroke="#9da5b4" stroke-width="1.100" stroke-linejoin="round"><path d="M6.330 3.500 L6.590 1.350 L9.410 1.350 L9.670 3.500 L11.060 4.300 L13.050 3.450 L14.470 5.900 L12.730 7.200 L12.730 8.800 L14.470 10.100 L13.050 12.550 L11.060 11.700 L9.670 12.500 L9.410 14.650 L6.590 14.650 L6.330 12.500 L4.940 11.700 L2.950 12.550 L1.530 10.100 L3.270 8.800 L3.270 7.200 L1.530 5.900 L2.950 3.450 L4.940 4.300Z"/><circle cx="8" cy="8" r="1.800"/></svg>
<span class="t" style="left:356.00px;top:1024.16px;font-size:12px;color:#9da5b4;letter-spacing:-0.008px;">生成</span>
<svg style="left:398px;top:1022px" width="13" height="14" viewBox="0 0 13 14" fill="none" stroke="#9da5b4" stroke-width="1.100" stroke-linejoin="round"><path d="M1.500 1.500v11l10-5.500z"/></svg>
<span class="t" style="left:1601.00px;top:1024.16px;font-size:12px;color:#9da5b4;letter-spacing:-0.147px;">行 1，列 1</span>
<span class="t" style="left:1672.50px;top:1024.16px;font-size:12px;color:#9da5b4;letter-spacing:-0.169px;">空格: 4</span>
<span class="t" style="left:1725.00px;top:1024.36px;font-size:12px;color:#9da5b4;transform:scaleX(0.9324);transform-origin:0 50%;">UTF-8</span>
<span class="t" style="left:1773.00px;top:1024.36px;font-size:12px;color:#9da5b4;transform:scaleX(0.7848);transform-origin:0 50%;">LF</span>
<span class="t" style="left:1802.00px;top:1023.86px;font-size:12px;color:#9da5b4;transform:scaleX(1.1884);transform-origin:0 50%;">&#123; &#125;</span>
<span class="t" style="left:1822.50px;top:1024.36px;font-size:12px;color:#9da5b4;transform:scaleX(0.9917);transform-origin:0 50%;">C++</span>
<svg style="left:1862px;top:1021px" width="16" height="16" viewBox="0 0 16 16" fill="none" stroke="#9da5b4" stroke-width="1.300" stroke-linecap="round" stroke-linejoin="round"><path d="M3 5.500c0-2 1.300-3 3-3s2.500 1 2.500 1M13 5.500c0-2-1.300-3-3-3S7.500 3.500 7.500 3.500M2 7.500c-1 1-1 3 0 4.500 1.300 1.500 3.800 2 6 2s4.700-.500 6-2c1-1.500 1-3.500 0-4.500"/><path d="M3 3.500h4v3.500H3zM9 3.500h4v3.500H9z"/><path d="M6 10v1.500M10 10v1.500"/><path d="M1.500 1.500l13 13"/></svg>
<svg style="left:1894px;top:1021px" width="16" height="16" viewBox="0 0 16 16"><path fill="#9da5b4" d="M13.377 10.573a7.630 7.630 0 0 1-.383-2.380V6.195a5.115 5.115 0 0 0-1.268-3.446 5.138 5.138 0 0 0-3.242-1.722c-.694-.072-1.400 0-2.070.227-.670.215-1.280.574-1.794 1.053a4.923 4.923 0 0 0-1.208 1.675 5.067 5.067 0 0 0-.431 2.022v2.200a7.610 7.610 0 0 1-.383 2.370L2 12.343l.479.658h3.505c0 .526.215 1.040.586 1.412.370.370.885.586 1.412.586.526 0 1.040-.215 1.411-.586s.587-.886.587-1.412h3.505l.478-.658-.586-1.770zm-4.690 3.147a.997.997 0 0 1-.705.299.997.997 0 0 1-.706-.300.997.997 0 0 1-.300-.705h1.999a.939.939 0 0 1-.287.706zm-5.515-1.710l.371-1.114a8.633 8.633 0 0 0 .443-2.691V6.004c0-.563.120-1.113.347-1.616.227-.514.550-.969.969-1.340.419-.382.910-.670 1.436-.837.538-.180 1.100-.240 1.650-.180a4.147 4.147 0 0 1 2.597 1.400 4.133 4.133 0 0 1 1.004 2.776v2.010c0 .909.144 1.818.443 2.691l.371 1.113h-9.630v-.012z"/></svg>
</div>
</body>
</html>
